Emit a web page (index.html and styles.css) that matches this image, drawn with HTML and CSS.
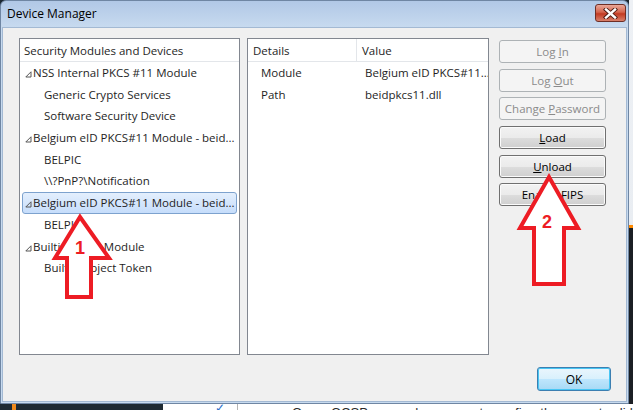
FILE: index.html
```html
<!DOCTYPE html>
<html lang="en">
<head>
    <meta charset="UTF-8">
    <title>Device Manager</title>
    <link rel="stylesheet" href="styles.css">
</head>
<body>
<div class="screen">
    <div class="top">
        <div class="window">
            <div class="titlebar">
                <span class="title">Device Manager</span>
                <span class="close">
                    <svg width="15" height="11" viewBox="0 0 15 11">
                        <path d="M3 1.5 L12 9.5 M12 1.5 L3 9.5" stroke="#4a1a12" stroke-width="4.2" stroke-linecap="square"/>
                        <path d="M3 1.5 L12 9.5 M12 1.5 L3 9.5" stroke="#fff" stroke-width="2.4" stroke-linecap="square"/>
                    </svg>
                </span>
            </div>
            <div class="client">
                <div class="panes">
                    <div class="pane tree">
                        <div class="head"><span>Security Modules and Devices</span></div>
                        <ul class="rows">
                            <li class="node"><svg class="twisty" width="7" height="7" viewBox="0 0 7 7"><path d="M6 0.8 V6 H0.8 Z" fill="none" stroke="#575757"/></svg>NSS Internal PKCS #11 Module</li>
                            <li class="leaf">Generic Crypto Services</li>
                            <li class="leaf">Software Security Device</li>
                            <li class="node"><svg class="twisty" width="7" height="7" viewBox="0 0 7 7"><path d="M6 0.8 V6 H0.8 Z" fill="none" stroke="#575757"/></svg>Belgium eID PKCS#11 Module - beid...</li>
                            <li class="leaf">BELPIC</li>
                            <li class="leaf">\\?PnP?\Notification</li>
                            <li class="node selected"><svg class="twisty" width="7" height="7" viewBox="0 0 7 7"><path d="M6 0.8 V6 H0.8 Z" fill="none" stroke="#575757"/></svg>Belgium eID PKCS#11 Module - beid...</li>
                            <li class="leaf">BELPIC</li>
                            <li class="node"><svg class="twisty" width="7" height="7" viewBox="0 0 7 7"><path d="M6 0.8 V6 H0.8 Z" fill="none" stroke="#575757"/></svg>Builtin Roots Module</li>
                            <li class="leaf">Builtin Object Token</li>
                        </ul>
                    </div>
                    <div class="pane details">
                        <div class="head">
                            <span class="col-name">Details</span>
                            <span class="col-value">Value</span>
                        </div>
                        <div class="drow">
                            <span class="col-name">Module</span>
                            <span class="col-value">Belgium eID PKCS#11...</span>
                        </div>
                        <div class="drow">
                            <span class="col-name">Path</span>
                            <span class="col-value">beidpkcs11.dll</span>
                        </div>
                    </div>
                    <div class="actions">
                        <button class="btn" disabled>Log <u>I</u>n</button>
                        <button class="btn" disabled>Log <u>O</u>ut</button>
                        <button class="btn" disabled>Change <u>P</u>assword</button>
                        <button class="btn"><u>L</u>oad</button>
                        <button class="btn"><u>U</u>nload</button>
                        <button class="btn">Enable FIPS</button>
                    </div>
                </div>
                <div class="footer">
                    <button class="btn ok">OK</button>
                </div>
            </div>
        </div>
        <div class="edge"></div>
    </div>
    <div class="under">
        <span class="taskbar"><i class="spark"></i></span>
        <span class="check">✓</span>
        <span class="field"></span>
        <span class="behind">Query OCSP responder servers to confirm the current validity of certificates</span>
    </div>

    <svg class="marks" width="633" height="410" viewBox="0 0 633 410">
        <polygon points="80,217 109,258 91,258 91,297 67,297 67,258 55,258" fill="#fff" stroke="#ed1c24" stroke-width="4" stroke-linejoin="miter"/>
        <text x="80" y="254" text-anchor="middle" class="num">1</text>
        <polygon points="549,177 578,228 564,228 564,284 534,284 534,228 520,228" fill="#fff" stroke="#ed1c24" stroke-width="4" stroke-linejoin="miter"/>
        <text x="547" y="228" text-anchor="middle" class="num">2</text>
    </svg>
</div>
</body>
</html>
```

FILE: styles.css
```css
body {
    margin: 0;
    width: 633px;
    height: 410px;
    overflow: hidden;
    background: #1c2731;
    font-family: "Open Sans", "Noto Sans", sans-serif;
    font-size: 11.5px;
    color: #1e1e1e;
}
.screen {
    position: relative;
    width: 633px;
    height: 410px;
    display: flex;
    flex-direction: column;
}
.top {
    display: flex;
    height: 404px;
    flex: none;
}
.window {
    width: 629px;
    height: 404px;
    box-sizing: border-box;
    border: 1px solid #6f86a3;
    border-radius: 6px 6px 0 0;
    background: linear-gradient(#b1c8e6, #c7daef 26px, #c7daef);
    padding: 0 1px 1px 1px;
    display: flex;
    flex-direction: column;
}
.titlebar {
    height: 26px;
    display: flex;
    justify-content: space-between;
    align-items: flex-start;
    padding: 0 1px 0 5px;
}
.title {
    font-size: 12px;
    line-height: 26px;
    color: #000;
}
.close {
    margin-top: 3px;
    width: 31px;
    height: 18px;
    box-sizing: border-box;
    border: 1px solid #6e2e25;
    border-radius: 3px;
    background: linear-gradient(#e9a899, #d4644d 45%, #c23a22 55%, #d8806b);
    display: flex;
    align-items: center;
    justify-content: center;
}
.client {
    flex: 1;
    background: #f0f0f0;
    border: 1px solid #a3b9d3;
    padding: 10px 0 0 16px;
    display: flex;
    flex-direction: column;
}
.panes {
    display: flex;
    height: 317px;
}
.pane {
    box-sizing: border-box;
    border: 1px solid #828790;
    background: #fff;
    overflow: hidden;
}
.tree {
    width: 221px;
    margin-right: 7px;
}
.details {
    width: 242px;
    margin-right: 10px;
}
.head {
    height: 23px;
    box-sizing: border-box;
    border-bottom: 1px solid #e3e6ea;
    display: flex;
    align-items: center;
    padding-left: 4px;
    white-space: nowrap;
}
.rows {
    list-style: none;
    margin: 0;
    padding: 0;
}
.rows li {
    height: 21.7px;
    line-height: 21.7px;
    white-space: nowrap;
    overflow: hidden;
}
.node {
    margin: 0 2px;
    padding-left: 2px;
    border: 1px solid transparent;
    border-radius: 3px;
    box-sizing: border-box;
    line-height: 19.7px !important;
}
.twisty {
    margin-right: 1px;
    vertical-align: -1px;
}
.leaf {
    padding-left: 24px;
}
.selected {
    border-color: #7da2ce;
    background: linear-gradient(#e4effd, #c6ddfb);
}
.details .head {
    padding-left: 0;
}
.details .head .col-name {
    border-right: 1px solid #e3e6ea;
    height: 100%;
    display: flex;
    align-items: center;
}
.col-name {
    width: 109px;
    padding-left: 5px;
    box-sizing: border-box;
    flex: none;
}
.col-value {
    padding-left: 5px;
    white-space: nowrap;
}
.drow {
    display: flex;
    height: 21.7px;
    line-height: 21.7px;
}
.drow .col-name {
    padding-left: 13px;
    width: 112px;
}
.actions {
    width: 107px;
    display: flex;
    flex-direction: column;
    padding-top: 2px;
    gap: 5.7px;
}
.btn {
    height: 23px;
    box-sizing: border-box;
    border: 1px solid #707070;
    border-radius: 3px;
    background: linear-gradient(#f2f2f2, #ebebeb 50%, #dddddd 51%, #cfcfcf);
    font-family: inherit;
    font-size: 11.5px;
    color: #000;
    padding: 0;
    box-shadow: inset 0 0 0 1px #fbfbfb;
}
.btn:disabled {
    border-color: #adb2b5;
    background: #f4f4f4;
    color: #8b8b8b;
    box-shadow: none;
}
.footer {
    display: flex;
    justify-content: flex-end;
    padding: 12px 15px 0 0;
}
.ok {
    width: 74px;
    height: 24px;
    border-color: #3c7fb1;
    background: linear-gradient(#eaf6fd, #d9f0fc 50%, #bee6fd 51%, #a7d9f5);
    box-shadow: inset 0 0 0 1px #48c6f4;
    font-size: 12px;
}
.edge {
    width: 4px;
    background: linear-gradient(#eef1f5, #e9edf2 225px, #ff8a00 225px, #ff8a00 228px, #1b1f24 228px);
}
.under {
    height: 6px;
    flex: none;
    display: flex;
    overflow: hidden;
    background: #fff;
}
.taskbar {
    width: 163px;
    background: #1e2a33;
    flex: none;
}
.spark {
    display: block;
    margin-left: 12px;
    width: 4px;
    height: 6px;
    background: #f08a1c;
}
.check {
    margin-left: 52px;
    color: #2a6fc9;
    font-size: 12px;
    line-height: 8px;
    flex: none;
}
.field {
    width: 1px;
    margin-left: 12px;
    background: #b5b5b5;
    flex: none;
}
.behind {
    margin-left: 54px;
    font-family: "Liberation Sans", sans-serif;
    font-size: 13px;
    line-height: 18px;
    color: #2b2b2b;
    white-space: nowrap;
    flex: none;
}
.marks {
    position: absolute;
    left: 0;
    top: 0;
    pointer-events: none;
}
.num {
    font-family: "Liberation Sans", sans-serif;
    font-weight: bold;
    font-size: 18px;
    fill: #ed1c24;
}
```
